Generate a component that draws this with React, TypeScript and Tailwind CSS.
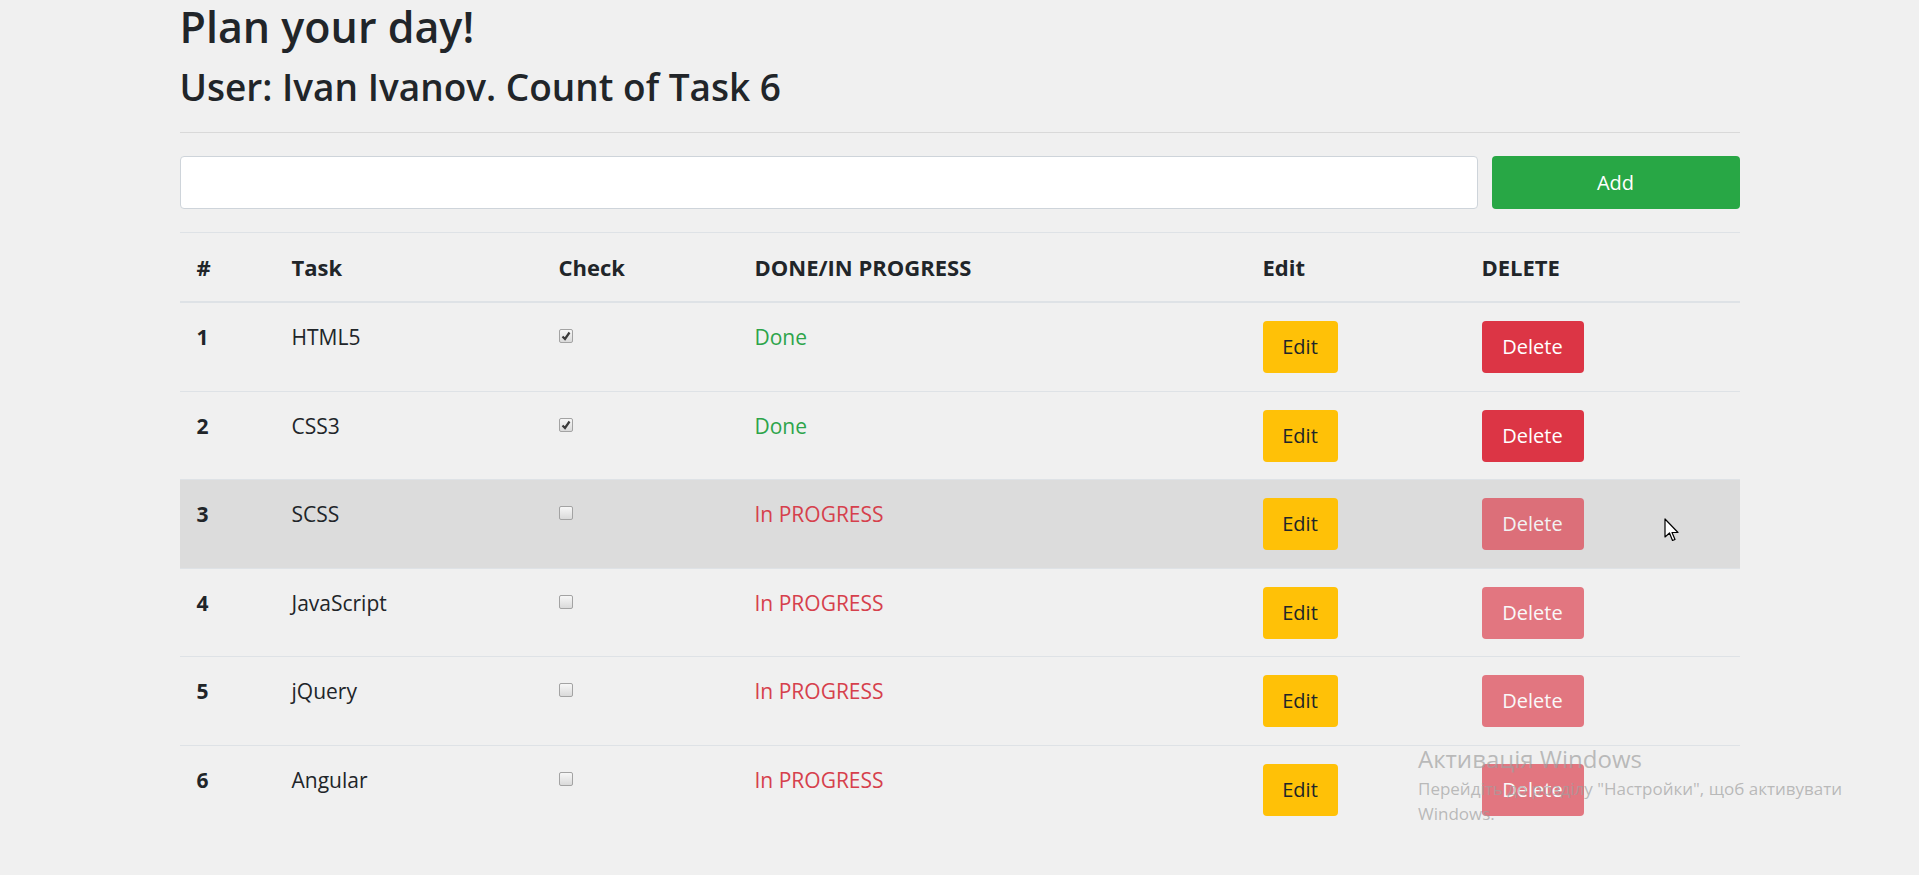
const tasks = [
  { id: 1, name: "HTML5", done: true },
  { id: 2, name: "CSS3", done: true },
  { id: 3, name: "SCSS", done: false },
  { id: 4, name: "JavaScript", done: false },
  { id: 5, name: "jQuery", done: false },
  { id: 6, name: "Angular", done: false },
];

function CheckBox({ checked }: { checked: boolean }) {
  return (
    <div className="mt-[9px] flex h-[14px] w-[14px] items-center justify-center rounded-[2px] border border-[#a3a3a3] bg-gradient-to-b from-[#f7f7f7] to-[#dadada]">
      {checked && (
        <svg width="10" height="10" viewBox="0 0 10 10">
          <path d="M1.5 5.5 L4 8 L8.5 1.5" fill="none" stroke="#3a3a3a" strokeWidth="2.2" />
        </svg>
      )}
    </div>
  );
}

export default function App() {
  return (
    <div className="relative min-h-screen bg-[#f0f0f0] font-['Open_Sans',sans-serif] text-[#212529]">
      <div className="mx-auto w-[1560px]">
        <h1 className="pt-[3px] text-[43px] leading-[48px] font-semibold">Plan your day!</h1>
        <h2 className="mt-[16px] text-[37px] leading-[40px] font-semibold">User: Ivan Ivanov. Count of Task 6</h2>
        <hr className="mt-[25px] border-t border-[#d9d9d9]" />
        <div className="mt-[23px] flex gap-[14px]">
          <input className="h-[53px] flex-1 rounded-[4px] border border-[#ced4da] bg-white px-4 text-[20px] outline-none" />
          <button className="h-[53px] w-[248px] rounded-[4px] bg-[#28a745] text-[20px] text-white">Add</button>
        </div>
        <table className="mt-[23px] w-full table-fixed border-collapse text-left">
          <colgroup>
            <col className="w-[95px]" />
            <col className="w-[267px]" />
            <col className="w-[196px]" />
            <col className="w-[508px]" />
            <col className="w-[219px]" />
            <col className="w-[275px]" />
          </colgroup>
          <thead>
            <tr className="border-t border-b-2 border-t-[#dee2e6] border-b-[#dee2e6] text-[22px] font-bold">
              <th className="px-[17px] py-[21px] leading-[26px]">#</th>
              <th className="px-[17px] py-[21px] leading-[26px]">Task</th>
              <th className="px-[17px] py-[21px] leading-[26px]">Check</th>
              <th className="px-[17px] py-[21px] leading-[26px]">DONE/IN PROGRESS</th>
              <th className="px-[17px] py-[21px] leading-[26px]">Edit</th>
              <th className="px-[17px] py-[21px] leading-[26px]">DELETE</th>
            </tr>
          </thead>
          <tbody className="text-[21px]">
            {tasks.map((t) => (
              <tr
                key={t.id}
                className={`border-t border-[#dee2e6] first:border-t-0 ${t.id === 3 ? "bg-[#dcdcdc]" : ""}`}
              >
                <td className="px-[17px] pt-[19px] align-top leading-[30px] font-bold">{t.id}</td>
                <td className="px-[17px] pt-[19px] align-top leading-[30px]">{t.name}</td>
                <td className="px-[17px] pt-[17px] align-top">
                  <CheckBox checked={t.done} />
                </td>
                <td
                  className={`px-[17px] pt-[19px] align-top leading-[30px] ${t.done ? "text-[#2da44a]" : "text-[#d6404c]"}`}
                >
                  {t.done ? "Done" : "In PROGRESS"}
                </td>
                <td className="px-[17px] pt-[18px] pb-[17.5px] align-top">
                  <button className="h-[52px] w-[75px] rounded-[4px] bg-[#ffc107] text-[20px] text-[#212529]">Edit</button>
                </td>
                <td className="px-[17px] pt-[18px] pb-[17.5px] align-top">
                  <button
                    className={`h-[52px] w-[102px] rounded-[4px] bg-[#dc3545] text-[20px] text-white ${t.done ? "" : "opacity-65"}`}
                  >
                    Delete
                  </button>
                </td>
              </tr>
            ))}
          </tbody>
        </table>
      </div>

      <div className="pointer-events-none absolute top-[743px] left-[1418px] text-[#a0a0a0]/70">
        <div className="text-[24px] leading-[32px]">Активація Windows</div>
        <div className="text-[17px] leading-[27px]">Перейдіть до розділу "Настройки", щоб активувати</div>
        <div className="text-[17px] leading-[24px]">Windows.</div>
      </div>

      <svg className="pointer-events-none absolute top-[518px] left-[1664px]" width="17" height="26" viewBox="0 0 17 26">
        <path d="M1 1 L1 19 L5.5 15 L8.5 22.5 L11 21.5 L8 14.5 L14 14.5 Z" fill="#fff" stroke="#000" strokeWidth="1.2" strokeLinejoin="round" />
      </svg>
    </div>
  );
}
